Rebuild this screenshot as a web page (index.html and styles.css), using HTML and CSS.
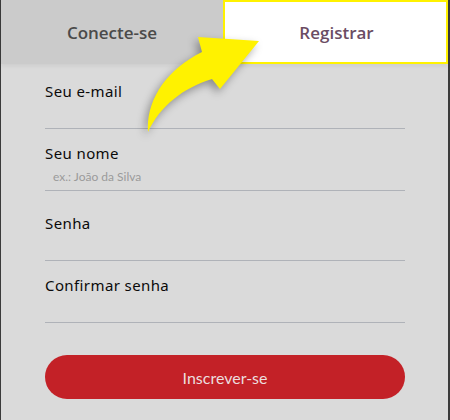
FILE: index.html
```html
<!DOCTYPE html>
<html>
<head>
    <meta charset="utf-8">
    <title>Registrar</title>
    <link rel="stylesheet" href="styles.css">
</head>
<body>
    <div class="panel">
        <div class="tabs">
            <div class="tab">Conecte-se</div>
            <div class="tab active">Registrar</div>
        </div>

        <form class="form">
            <div class="field">
                <label for="email">Seu e-mail</label>
                <input type="email" id="email">
            </div>
            <div class="field">
                <label for="nome">Seu nome</label>
                <input type="text" id="nome" placeholder="ex.: João da Silva">
            </div>
            <div class="field spaced">
                <label for="senha">Senha</label>
                <input type="password" id="senha">
            </div>
            <div class="field">
                <label for="confirmar">Confirmar senha</label>
                <input type="password" id="confirmar">
            </div>
            <button type="button" class="button">Inscrever-se</button>
        </form>

        <svg class="arrow" width="140" height="150" viewBox="130 20 140 150">
            <path d="M148,132 C146,100 166,70 202,52 L198,37 L259,41 L220,89 L212,79 C183,88 160,106 148,132 Z" fill="#fff200"/>
        </svg>
    </div>
</body>
</html>
```

FILE: styles.css
```css
html, body {
    height: 100%;
}
body {
    margin: 0;
    background: #3a3a3a;
    font-family: "Noto Sans", sans-serif;
}
.panel {
    position: relative;
    margin: 0 2px 0 1px;
    height: 100%;
    background: #dadada;
}
.tabs {
    display: flex;
    height: 64px;
    box-shadow: 0 2px 4px rgba(0,0,0,0.06);
}
.tab {
    flex: 1;
    display: flex;
    align-items: center;
    justify-content: center;
    background: #cbcbcb;
    color: #4a4a4a;
    font-family: "Open Sans", sans-serif;
    font-weight: 600;
    font-size: 17px;
    box-sizing: border-box;
}
.tab.active {
    flex: 0 0 225px;
    background: #fff;
    border: 2px solid #fff200;
    color: #6b4c63;
    padding-left: 2px;
}
.form {
    padding: 3px 43px 0 44px;
}
.field {
    margin-top: 14px;
}
.field.spaced {
    margin-top: 22px;
}
.field label {
    display: block;
    height: 20px;
    line-height: 20px;
    font-size: 15px;
    letter-spacing: 0.4px;
    color: #0a0a0a;
}
.field input {
    display: block;
    width: 100%;
    height: 28px;
    box-sizing: border-box;
    margin: 0;
    padding: 0 8px;
    border: none;
    border-bottom: 1px solid #afb2b8;
    background: transparent;
    font-family: "Lato", sans-serif;
    font-size: 12px;
    outline: none;
}
.field input::placeholder {
    color: #9a9a9a;
}
.button {
    display: block;
    width: 100%;
    height: 44px;
    margin-top: 32px;
    border: none;
    border-radius: 22px;
    background: #c32127;
    color: #ecdede;
    font-family: "Lato", sans-serif;
    font-size: 16px;
    cursor: pointer;
}
.arrow {
    position: absolute;
    left: 129px;
    top: 20px;
    filter: drop-shadow(-3px 4px 4px rgba(0,0,0,0.35));
}
```
